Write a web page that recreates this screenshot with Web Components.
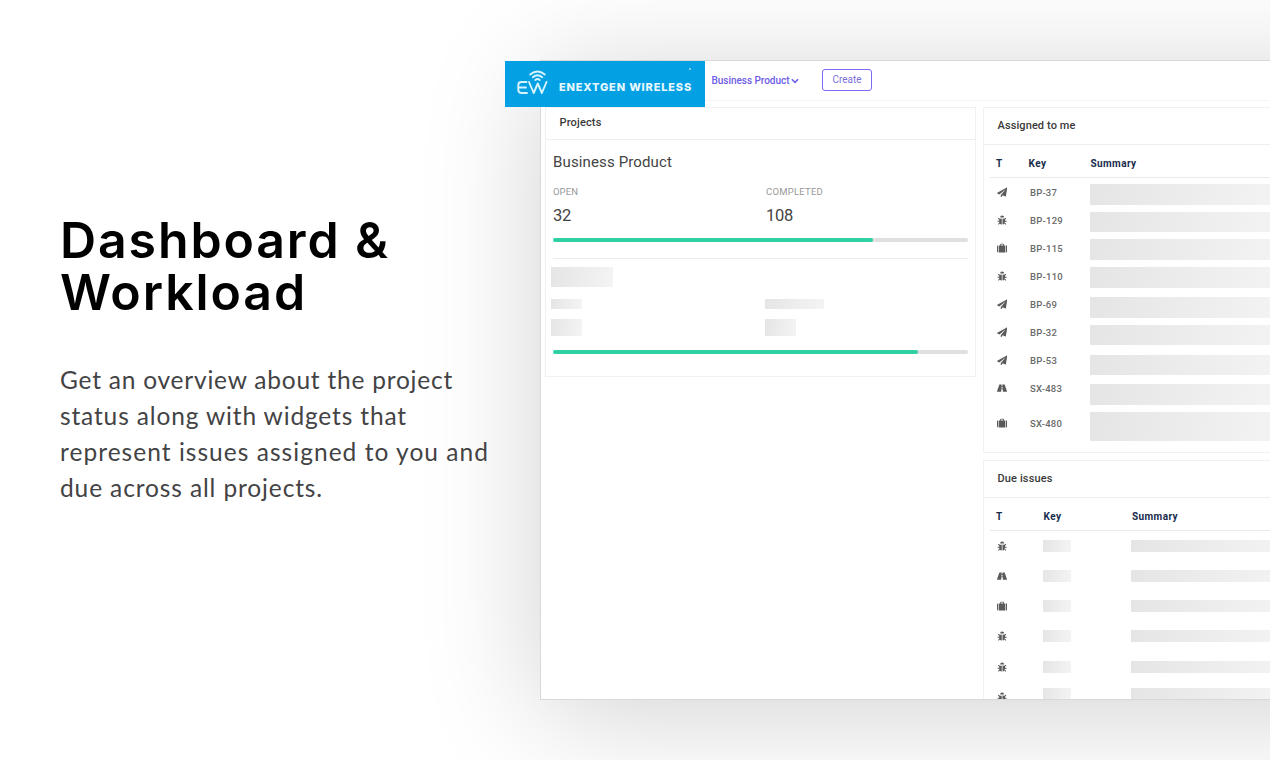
<!DOCTYPE html>
<html lang="en">
<head>
<meta charset="utf-8">
<title>Dashboard &amp; Workload</title>
<style>
html,body{margin:0;height:760px;overflow:hidden;background:#fff;font-family:Roboto,"Liberation Sans",sans-serif}
</style>
</head>
<body>
<promo-page></promo-page>
<script>
const define = (name, html, init) => customElements.define(name, class extends HTMLElement {
  connectedCallback() {
    if (this.shadowRoot) return;
    this.attachShadow({ mode: 'open' });
    this.shadowRoot.innerHTML = typeof html === 'function' ? html(this) : html;
    if (init) init(this);
  }
});

// One line of text, tracked so that it spans the width given in "w".
define('fit-text', `<style>:host{display:block;white-space:nowrap}span{display:inline-block}</style><span><slot></slot></span>`, el => {
  const span = el.shadowRoot.querySelector('span');
  const n = el.textContent.length;
  span.style.letterSpacing = ((+el.getAttribute('w') - span.getBoundingClientRect().width) / n) + 'px';
});

define('hold-bar', el => `<style>:host{display:block;flex:none;width:${el.getAttribute('w')}px;height:${el.getAttribute('h')}px;margin-top:${el.getAttribute('t') || 0}px;background:linear-gradient(100deg,#e5e5e5,#f4f4f4)}</style>`);

const shapes = {
  plane: '<path d="M15.6 .6 .5 9.2c-.6.4-.5 1.1 0 1.3l3.500 1.500L13 3.800c.2-.2.4.1.3.3L6 13.200v2.200c0 .7.8.9 1.200.4l2-2.500 4 1.700c.4.200.9-.1 1-.600L16.500 1.200c.1-.500-.4-.900-.9-.600Z"/>',
  bug: '<path d="M5 4a3.200 3.200 0 0 1 6.400 0ZM7.600 6.200v9C4.800 14.800 3.600 13 3.600 10.600H1V9.200h2.600V7.600L1.500 5.500l1-1L4.700 6h7l2.200-1.500 1 1-2.100 2.100v1.600h2.600v1.400h-2.600c0 2.400-1.200 4.200-4 4.600v-9ZM4 12l1 1.100-2.300 2.400-1.100-1ZM12.400 12l-1 1.100 2.300 2.400 1.100-1Z"/>',
  case: '<path d="M0 5.200C0 4.300.6 3.800 1.400 3.800H2V15h-.6C.6 15 0 14.500 0 13.700ZM3 3.800h2V2.300C5 1.500 5.600 1 6.300 1h3.400c.7 0 1.300.5 1.300 1.300v1.500h2V15H3ZM6.300 3.800h3.400V2.300H6.300ZM14 3.800h.6c.8 0 1.400.5 1.400 1.400v8.500c0 .8-.6 1.300-1.400 1.300H14Z"/>',
  road: '<path d="M4.200 2.500h3.300L7.300 5h1.400l-.2-2.500h3.300c.4 0 .6.200.7.500L16 13.200c.1.500-.2.900-.7.900H9.400L9.100 10H6.900l-.3 4.100H.7c-.5 0-.8-.4-.7-.9L3.500 3c.1-.3.300-.5.700-.5ZM7.200 6.200 7 8.600h2l-.2-2.400Z"/>'
};
define('issue-icon', el => `<style>:host{display:block;width:10.500px;height:10px;margin-left:-.4px}svg{display:block;width:100%;height:100%;fill:#5a5a5a}</style><svg viewBox="0 0 16.500 16" preserveAspectRatio="${el.getAttribute('kind') === 'case' ? 'none' : 'xMinYMid'}">${shapes[el.getAttribute('kind')]}</svg>`);

define('progress-line', el => `<style>:host{display:block;height:4px;border-radius:2px;background:#e0e0e0}i{display:block;height:4px;border-radius:2px;background:#2fd0a4;width:${el.getAttribute('v')}px}</style><i></i>`);

define('brand-logo', `<style>
:host{display:flex;box-sizing:border-box;width:200px;height:46px;background:#03a1e4;padding:6px 0 0 10px;color:#e6f7fe}
svg{width:34px;height:30px;flex:none}
fit-text{font:800 11px/14px Inter,"Liberation Sans",sans-serif;font-optical-sizing:none;margin:13px 0 0 10px}
i{width:2px;height:2px;background:#7fd0f2;margin:1px 0 0 -3px;flex:none}
</style>
<svg viewBox="0 0 34 30" fill="none" stroke="#d9f3fd" stroke-width="1.900" stroke-linecap="round" stroke-linejoin="round">
<path d="M11.500 15H6.500Q3.300 15 3.300 18v4.500q0 3.500 3.200 3.500h5.500M3.300 20.500H11M14 15l4.700 11 4.100-9.500 4.100 9.500 4.600-11"/>
<path stroke-width="1.900" d="M15.200 7.500q7.300-6.200 14.600 0M17.800 10.200q4.700-3.900 9.400 0M20.300 12.900q2.200-1.700 4.400 0"/></svg>
<fit-text w="133">ENEXTGEN WIRELESS</fit-text><i></i>`);

define('top-bar', `<style>
:host{display:flex;height:39px;border-bottom:1px solid #f5f5f7;align-items:flex-start;color:#6c5ce7;padding-left:170px}
.p{font:500 10px/12px Roboto;margin:13.500px 0 0 .5px}
svg{width:8px;height:6px;margin:16.500px 0 0 1.500px}
button{box-sizing:border-box;width:50px;height:22px;margin:8px 0 0 23px;padding:0;border:1px solid #7a6cf5;border-radius:3px;background:#fff;color:#7b70dd;font:400 10px/20px Roboto}
</style>
<fit-text class="p" w="78">Business Product</fit-text>
<svg viewBox="0 0 8 6" fill="none" stroke="#6c5ce7" stroke-width="1.500"><path d="m.8 1.200 3.200 3.200 3.200-3.200"/></svg>
<button>Create</button>`);

define('card-box', el => `<style>
:host{display:block;box-sizing:border-box;border:1px solid #f1f1f2;background:#fff}
header{box-sizing:border-box;height:${el.getAttribute('head')}px;border-bottom:1px solid #eee;display:flex;align-items:center;padding:0 0 1px 13.500px;color:#3a3a3a;font:500 11px/14px Roboto}
</style><header><fit-text w="${el.getAttribute('w')}">${el.getAttribute('label')}</fit-text></header><slot></slot>`);

define('project-list', `<style>
:host{display:block;padding:0 7px}
.n{font:400 15px/20px Roboto;color:#444;padding-top:12px}
.g{display:grid;grid-template-columns:213px 1fr}
.l{font:400 9.500px/12px Roboto;color:#999;margin-top:14px}
.v{font:400 16.500px/20px Roboto;color:#444;margin-top:8px}
hr{border:0;height:1px;background:#ebebeb;margin:16px 0 0}
.s{margin-left:-2px}
</style>
<fit-text class="n" w="119">Business Product</fit-text>
<div class="g"><fit-text class="l" w="25">OPEN</fit-text><fit-text class="l" w="57">COMPLETED</fit-text>
<fit-text class="v" w="18">32</fit-text><fit-text class="v" w="27">108</fit-text></div>
<progress-line v="320" style="margin-top:12px"></progress-line><hr>
<div class="s"><hold-bar w="62" h="20" t="8"></hold-bar>
<div class="g" style="grid-template-columns:214px 1fr"><hold-bar w="31" h="10" t="12"></hold-bar><hold-bar w="59" h="10" t="12"></hold-bar>
<hold-bar w="31" h="17" t="10"></hold-bar><hold-bar w="31" h="17" t="10"></hold-bar></div></div>
<progress-line v="365" style="margin-top:14px"></progress-line>`);

define('issue-head', el => `<style>
:host{display:grid;grid-template-columns:${el.getAttribute('cols')};box-sizing:border-box;height:${el.getAttribute('h')}px;margin-left:6px;padding:13px 0 0 6px;border-bottom:1px solid #eaeaea;font:700 10px/12px Roboto;color:#172b4d}
</style><span>T</span><fit-text w="18">Key</fit-text><fit-text w="46">Summary</fit-text>`);

// Issues assigned to the user: icon, key, top and height of the summary block, row centre.
const assigned = [['plane','BP-37',184,21,192],['bug','BP-129',212,20,220],['case','BP-115',239,21,248],['bug','BP-110',267,21,276],['plane','BP-69',297,21,304],['plane','BP-32',325,20,332],['plane','BP-53',355,20,360],['road','SX-483',384,21,388],['case','SX-480',412,29,423]];
const stack = (rows, top) => { let y = top; return rows.map(r => { const t = r[0] - y; y = r[0] + r[1]; return [t, r[1]]; }); };

define('assigned-list', () => {
  const bars = stack(assigned.map(r => [r[2], r[3]]), 178);
  const rows = stack(assigned.map(r => [r[4] - 6, 12]), 178);
  return `<style>:host{display:grid;grid-template-columns:33px 60px 1fr;margin-left:13px}
  issue-icon{height:10px;padding:1px 0}.icons{margin-top:-.4px}fit-text{font:500 9.500px/12px Roboto;color:#6a6a6a}</style>
  <div class="icons">${assigned.map((r, i) => `<issue-icon kind="${r[0]}" style="margin-top:${rows[i][0]}px"></issue-icon>`).join('')}</div>
  <div style="padding-top:.6px">${assigned.map((r, i) => `<fit-text w="${{5:27,6:33}[r[1].length] - (r[1][0] === 'S' ? 1 : 0)}" style="margin-top:${rows[i][0]}px">${r[1]}</fit-text>`).join('')}</div>
  <div>${bars.map(b => `<hold-bar w="200" h="${b[1]}" t="${b[0]}"></hold-bar>`).join('')}</div>`;
});

const due = [['bug',540],['road',570],['case',600],['bug',630],['bug',661],['bug',688]];
define('due-list', () => {
  const bars = stack(due.map(r => [r[1], 12]), 531);
  const icons = stack(due.map((r, i) => [i === 5 ? 691 : r[1], 12]), 531);
  const col = w => `<div>${bars.map(b => `<hold-bar w="${w}" h="${b[1]}" t="${b[0]}"></hold-bar>`).join('')}</div>`;
  return `<style>:host{display:grid;grid-template-columns:46px 88px 1fr;margin-left:13px}issue-icon{padding:1px 0}.icons{margin-top:-.5px}</style>
  <div class="icons">${due.map((r, i) => `<issue-icon kind="${r[0]}" style="margin-top:${icons[i][0]}px"></issue-icon>`).join('')}</div>${col(28)}${col(160)}`;
});

define('app-window', `<style>
:host{display:block;box-sizing:border-box;height:640px;border:1px solid #d8d8d8;background:#fff;box-shadow:0 14px 110px rgba(0,0,0,.18);position:relative}
.clip{height:638px;overflow:hidden}
.body{display:grid;grid-template-columns:431px 400px;gap:7px;padding:6px 0 0 4px}
.right{display:flex;flex-direction:column;gap:7px}
brand-logo{position:absolute;left:-36px;top:0}
</style>
<div class="clip"><top-bar></top-bar>
<div class="body">
<div><card-box label="Projects" w="42" head="32" style="height:270px"><project-list></project-list></card-box></div>
<div class="right">
<card-box label="Assigned to me" w="78" head="37" style="height:346px"><issue-head cols="32.5px 62px 1fr" h="33"></issue-head><assigned-list></assigned-list></card-box>
<card-box label="Due issues" w="55" head="37" style="height:300px"><issue-head cols="47.5px 88.500px 1fr" h="33"></issue-head><due-list></due-list></card-box>
</div></div></div>
<brand-logo></brand-logo>`);

define('promo-copy', `<style>
:host{display:block;padding:214px 0 0 60px;position:relative}
h1{margin:0;color:#000;font:600 50px/52px Inter;font-optical-sizing:none;font-variation-settings:"opsz" 14}
p{margin:44px 0 0;color:#434345;font:400 24.500px/36px Lato}
</style>
<h1><fit-text w="330">Dashboard &amp;</fit-text><fit-text w="247">Workload</fit-text></h1>
<p><fit-text w="393">Get an overview about the project</fit-text><fit-text w="347">status along with widgets that</fit-text><fit-text w="429">represent issues assigned to you and</fit-text><fit-text w="263">due across all projects.</fit-text></p>`);

define('promo-page', `<style>
:host{display:grid;grid-template-columns:540px 860px;width:1270px;height:760px;overflow:hidden}
promo-copy{z-index:1}
app-window{margin-top:60px}
</style><promo-copy></promo-copy><app-window></app-window>`);
</script>
</body>
</html>
